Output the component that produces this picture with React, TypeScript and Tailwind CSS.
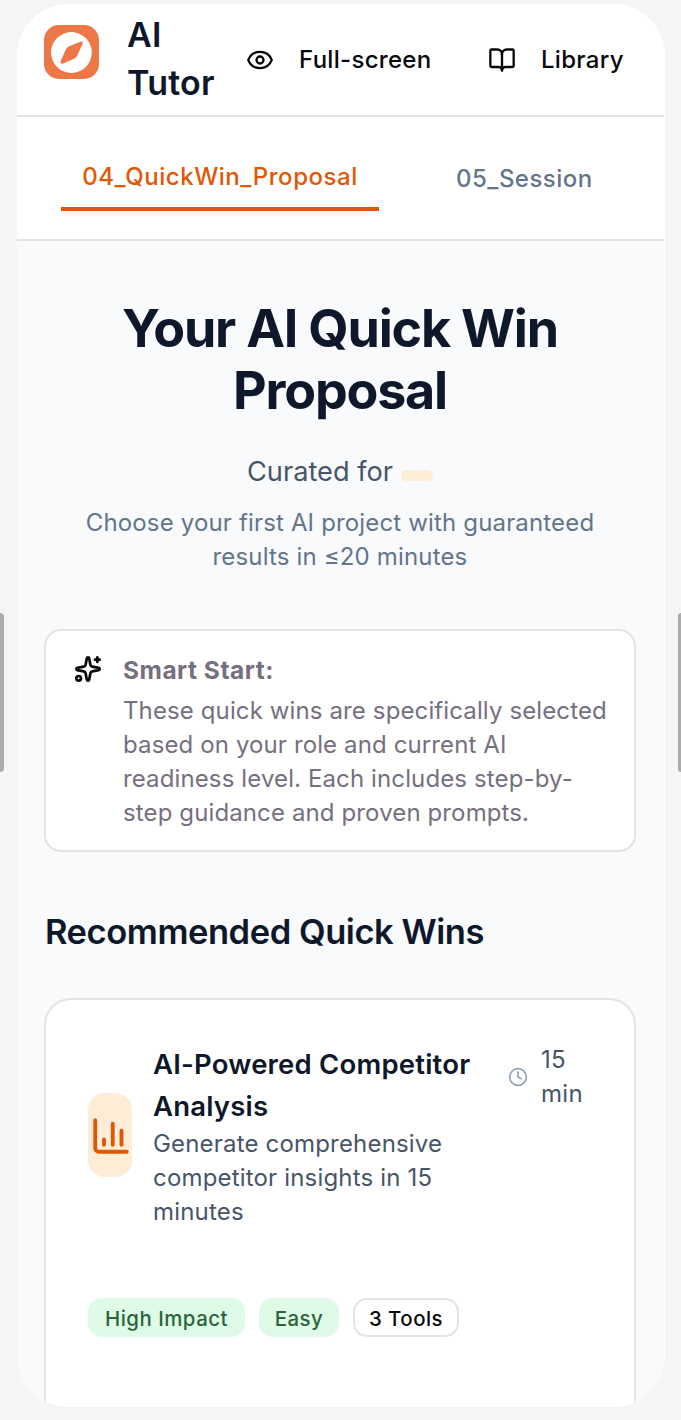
import { BookOpen, ChartColumn, Clock, Eye, Sparkles } from "lucide-react";

function Logo() {
  return (
    <svg className="mt-[21px] h-[54px] w-[55px] shrink-0" viewBox="0 0 55 54">
      <rect width="55" height="54" rx="15" fill="#ee7748" />
      <circle cx="27.4" cy="27.5" r="20.4" fill="#fff" />
      <path
        d="M37 16.5 L25.3 21.3 Q22.8 22.3 21.8 24.6 L16.5 36.5 Q16.2 39 18.6 38.7 L30 33.8 Q32.3 32.8 33.3 30.5 L38.7 18.5 Q39 16 37 16.5Z"
        fill="#ee7748"
      />
    </svg>
  );
}

function Header() {
  return (
    <header className="flex h-[113px] shrink-0 border-b-2 border-[#e4e4e5] bg-white pl-[27px]">
      <Logo />
      <div className="ml-[28px] mt-[7px] w-[90px] text-[34px] font-semibold leading-[48px] tracking-[0.2px] text-[#0f172a]">
        AI
        <br />
        Tutor
      </div>
      <nav className="ml-[29px] flex h-[111px] items-center text-[24px] font-medium tracking-[0.3px] text-[#09090b]">
        <Eye className="h-[28px] w-[28px]" strokeWidth={2} />
        <span className="ml-[25px] w-[189px] whitespace-nowrap">Full-screen</span>
        <BookOpen className="h-[28px] w-[28px]" strokeWidth={2} />
        <span className="ml-[25px] whitespace-nowrap">Library</span>
      </nav>
    </header>
  );
}

function Tabs() {
  return (
    <div className="flex h-[124px] shrink-0 border-b-2 border-[#e4e4e5] bg-white pl-[44px] text-[24px] font-medium tracking-[0.55px]">
      <div className="mt-[26px] h-[68px] w-[318px] whitespace-nowrap border-b-4 border-[#e15706] text-center leading-[67px] text-[#e15706]">
        04_QuickWin_Proposal
      </div>
      <div className="ml-[77px] mt-[28px] whitespace-nowrap leading-[67px] tracking-[0.48px] text-[#64748b]">
        05_Session
      </div>
    </div>
  );
}

function SmartStart() {
  return (
    <section className="mt-[55px] flex h-[223px] shrink-0 rounded-[17px] border-2 border-[#e4e4e5] bg-white pl-[28px] pt-[22px] text-[24px] text-[#756f80]">
      <Sparkles className="mt-[2px] h-[28px] w-[28px] shrink-0 text-[#09090b]" strokeWidth={2.3} />
      <div className="ml-[21px] whitespace-nowrap leading-[34px]">
        <div className="mb-[7px] text-[24.5px] font-bold tracking-[0.5px]">Smart Start:</div>
        <p className="tracking-[0.12px]">
          These quick wins are specifically selected
          <br />
          based on your role and current AI
          <br />
          readiness level. Each includes step-by-
          <br />
          step guidance and proven prompts.
        </p>
      </div>
    </section>
  );
}

function QuickWin() {
  return (
    <article className="mt-[42px] h-[480px] shrink-0 rounded-[27px] border-2 border-[#e4e4e5] bg-white px-[42px] pt-[43px]">
      <div className="flex">
        <div className="mt-[50px] flex h-[84px] w-[44px] shrink-0 items-center justify-center rounded-[17px] bg-[#fdecd6] pl-[2px] pt-[2px]">
          <ChartColumn className="h-[42px] w-[42px] shrink-0 text-[#e15706]" strokeWidth={2.2} />
        </div>
        <div className="ml-[21px] w-[355px] whitespace-nowrap">
          <h3 className="text-[27.5px] font-semibold leading-[42px] tracking-[0.2px] text-[#0f172a]">
            AI-Powered Competitor
            <br />
            Analysis
          </h3>
          <p className="text-[24px] leading-[34px] tracking-[0.18px] text-[#475569]">
            Generate comprehensive
            <br />
            competitor insights in 15
            <br />
            minutes
          </p>
        </div>
        <Clock className="mt-[24px] h-[20px] w-[20px] shrink-0 text-[#94a3b8]" />
        <span className="ml-[13px] text-[24px] leading-[34px] tracking-[0.3px] text-[#475569]">
          15
          <br />
          min
        </span>
      </div>
      <div className="mt-[69px] flex gap-[14px] whitespace-nowrap text-[20.4px] font-medium leading-[41px] tracking-[0.5px]">
        <span className="h-[39px] w-[157px] rounded-[14px] bg-[#dffbe7] text-center text-[#27653a]">
          High Impact
        </span>
        <span className="h-[39px] w-[80px] rounded-[14px] bg-[#dffbe7] text-center text-[#27653a]">
          Easy
        </span>
        <span className="h-[39px] w-[106px] rounded-[14px] border-2 border-[#e4e4e5] text-center leading-[37px] text-[#09090b]">
          3 Tools
        </span>
      </div>
    </article>
  );
}

export default function App() {
  return (
    <div className="relative flex h-[1420px] w-[681px] overflow-hidden bg-[#f5f5f5] pl-[17px] pt-[4px] font-['Inter',sans-serif]">
      <div className="flex h-[1403px] w-[648px] flex-col overflow-hidden rounded-[52px] bg-white pr-px">
        <Header />
        <Tabs />
        <main className="flex min-h-0 flex-1 flex-col overflow-hidden bg-[#f8fafc] pl-[27px] pr-[28px] pt-[57px]">
          <div className="shrink-0 whitespace-nowrap text-center">
            <h1 className="text-[52px] font-bold leading-[62px] tracking-[-1.2px] text-[#0f172a]">
              Your AI Quick Win
              <br />
              Proposal
            </h1>
            <div className="mt-[26px] flex h-[48px] justify-center text-[27.2px] leading-[48px] text-[#475569]">
              Curated for
              <span className="ml-[8px] mt-[22px] h-[11px] w-[32px] rounded-[6px] bg-[#fdecd6]" />
            </div>
            <p className="mt-[10px] text-[24px] leading-[34px] tracking-[0.16px] text-[#64748b]">
              Choose your first AI project with guaranteed
              <br />
              results in ≤20 minutes
            </p>
          </div>
          <SmartStart />
          <h2 className="ml-px mt-[56px] shrink-0 whitespace-nowrap text-[34.5px] font-semibold leading-[48px] tracking-[-0.45px] text-[#0f172a]">
            Recommended Quick Wins
          </h2>
          <QuickWin />
        </main>
      </div>
      <div className="absolute left-0 top-[613px] h-[159px] w-[4px] rounded-r-[4px] bg-[#ababab]" />
      <div className="absolute left-[678px] top-[613px] h-[159px] w-[3px] rounded-l-[4px] bg-[#ababab]" />
    </div>
  );
}
